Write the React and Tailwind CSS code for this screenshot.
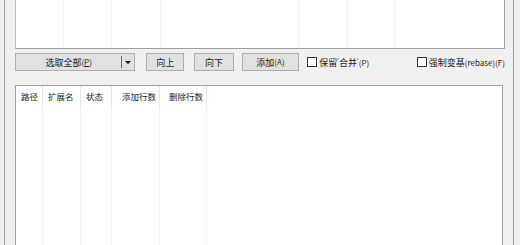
const font = { fontFamily: '"Noto Sans CJK SC", "Noto Sans", sans-serif' };

const topCols = [48, 48, 49, 138, 49, 47];

const cols = [
  { label: '路径', w: 27, align: 'left' },
  { label: '扩展名', w: 38, align: 'left' },
  { label: '状态', w: 31, align: 'left' },
  { label: '添加行数', w: 48, align: 'right' },
  { label: '删除行数', w: 47, align: 'right' },
];

const Btn = ({ children, className = '' }) => (
  <div className={`h-[18px] flex items-center justify-center bg-[#e1e1e1] border border-[#adadad] text-[9px] text-[#1a1a1a] leading-none whitespace-nowrap ${className}`}>
    {children}
  </div>
);

const Check = ({ children, className = '' }) => (
  <div className={`flex items-center gap-[2px] text-[9px] text-[#1a1a1a] leading-none whitespace-nowrap ${className}`}>
    <span className="w-[10px] h-[10px] border border-[#333333] bg-white shrink-0" />
    <span>{children}</span>
  </div>
);

const Small = ({ children }) => <span className="text-[8px]">{children}</span>;

export default function App() {
  return (
    <div className="w-[520px] h-[245px] bg-[#f0f0f0] overflow-hidden pl-[4px] pr-[6px]" style={font}>
      <div className="h-full border-x border-[#a0a0a0] pl-[10px] pr-[8px] flex flex-col">
        {/* upper list (scrolled, only bottom visible) */}
        <div className="h-[49px] shrink-0 bg-white border-x border-b border-[#a0a0a0] border-l-[#a6c4e4] flex">
          {topCols.map((w, i) => (
            <div key={i} className="h-full border-r border-[#eef4fb]" style={{ width: w }} />
          ))}
        </div>

        {/* buttons */}
        <div className="mt-[4px] h-[18px] shrink-0 flex items-center">
          <div className="w-[123px] h-[18px] flex bg-[#e1e1e1] border border-[#adadad] text-[9px] text-[#1a1a1a] leading-none">
            <div className="flex-1 flex items-center justify-center border-r border-[#6a6a6a] my-[2px]">
              选取全部<Small>(<span className="underline">P</span>)</Small>
            </div>
            <div className="w-[12px] flex items-center justify-center">
              <svg width="6" height="3" viewBox="0 0 6 3"><path d="M0 0h6L3 3z" fill="#000" /></svg>
            </div>
          </div>
          <Btn className="w-[39px] ml-[11px]">向上</Btn>
          <Btn className="w-[40px] ml-[10px]">向下</Btn>
          <Btn className="w-[59px] ml-[8px]">添加<Small>(A)</Small></Btn>
          <Check className="w-[112px] ml-[8px]">保留<span className="text-[6px] align-top">'</span>合并<span className="text-[6px] align-top">'</span><Small>(P)</Small></Check>
          <Check>强制变基<Small>(rebase)(F)</Small></Check>
        </div>

        {/* lower list */}
        <div className="mt-[14px] flex-1 bg-white border border-[#a0a0a0] border-b-0 mr-[2px] flex flex-col">
          <div className="h-[20px] flex shrink-0">
            {cols.map((c) => (
              <div
                key={c.label}
                className={`h-full border-r border-[#e5e5e5] flex items-center text-[8.5px] text-[#1a1a1a] leading-none ${c.align === 'right' ? 'justify-end pr-[3px]' : 'pl-[5px]'}`}
                style={{ width: c.w }}
              >
                {c.label}
              </div>
            ))}
          </div>
          <div className="flex-1 flex">
            {cols.map((c) => (
              <div key={c.label} className="h-full border-r border-[#eef4fb]" style={{ width: c.w }} />
            ))}
          </div>
        </div>
      </div>
    </div>
  );
}
